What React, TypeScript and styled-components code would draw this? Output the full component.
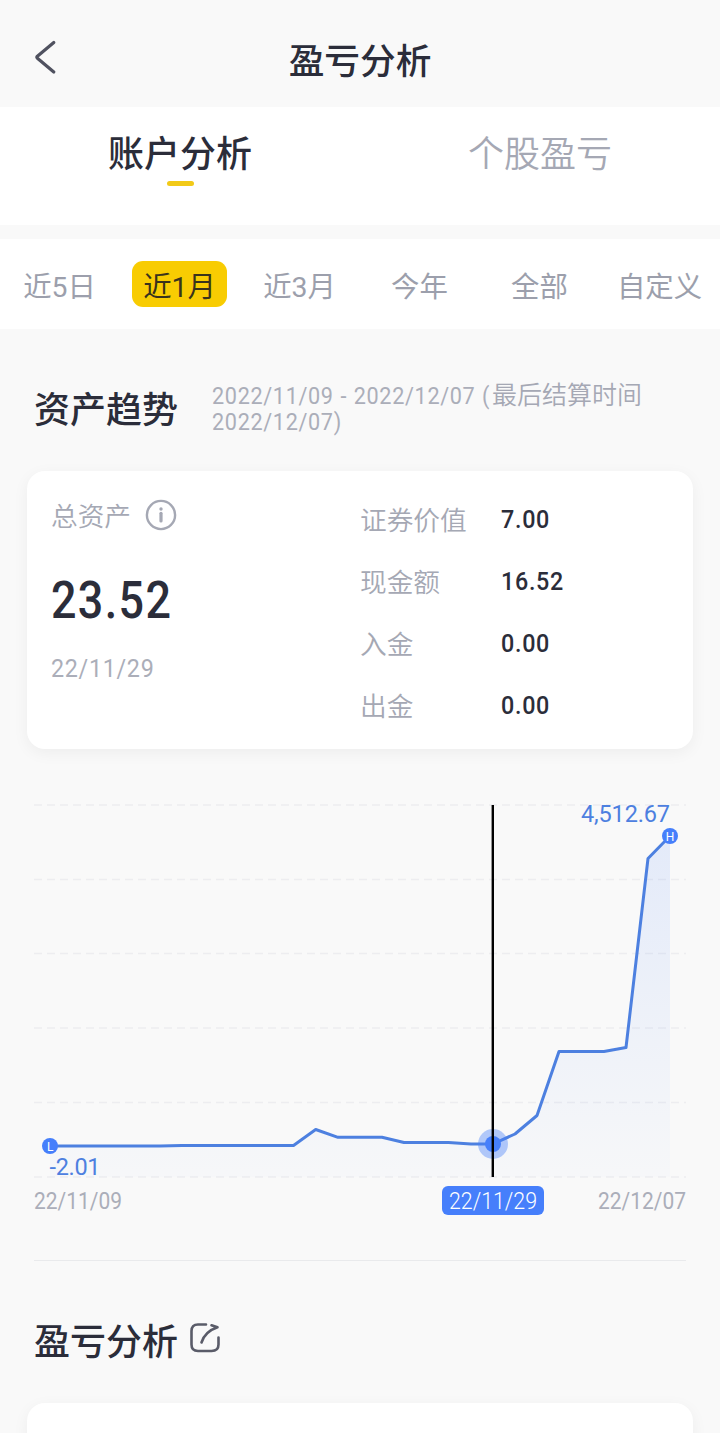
import React from "react";
import styled, { createGlobalStyle } from "styled-components";

const GlobalStyle = createGlobalStyle`
  * { box-sizing: border-box; }
  body {
    margin: 0;
    background: #f9f9f9;
    color: #2b2d3a;
    font-family: Roboto, "Noto Sans CJK SC", sans-serif;
  }
`;

const Screen = styled.main`
  width: 720px;
  height: 1433px;
  overflow: hidden;
  display: flex;
  flex-direction: column;
  background: #f9f9f9;
`;

const Header = styled.header`
  height: 107px;
  flex: none;
  display: grid;
  grid-template-columns: 92px 1fr 92px;
  align-items: center;
  padding-top: 11px;
`;

const BackButton = styled.button`
  border: 0;
  padding: 0 0 0 30px;
  margin-top: -5px;
  background: none;
  display: flex;
`;

const Title = styled.h1`
  margin: 0;
  text-align: center;
  font: 500 35.7px/54px "Noto Sans CJK SC", sans-serif;
`;

const MainTabs = styled.nav`
  height: 118px;
  flex: none;
  display: grid;
  grid-template-columns: 1fr 1fr;
  background: #fff;
`;

const MainTab = styled.div<{ $active?: boolean }>`
  display: flex;
  flex-direction: column;
  align-items: center;
  padding-top: 17px;
  font: ${(p) => (p.$active ? 500 : 350)} 36px/54px "Noto Sans CJK SC", sans-serif;
  color: ${(p) => (p.$active ? "#2b2d3a" : "#a5a8b4")};
`;

const Indicator = styled.span`
  width: 27px;
  height: 5px;
  margin-top: 3px;
  border-radius: 3px;
  background: #f2ca18;
`;

const Ranges = styled.nav`
  height: 90px;
  flex: none;
  margin-top: 14px;
  display: grid;
  grid-template-columns: repeat(6, 120px);
  align-items: center;
  justify-items: center;
  background: #fff;
`;

const Range = styled.div<{ $active?: boolean }>`
  width: 95px;
  height: 46px;
  margin-right: 1px;
  border-radius: 11px;
  display: flex;
  align-items: center;
  justify-content: center;
  white-space: nowrap;
  font: 400 28.4px/46px Roboto, "Noto Sans CJK SC", sans-serif;
  color: ${(p) => (p.$active ? "#39331c" : "#9c9fac")};
  background: ${(p) => (p.$active ? "#f8cc02" : "transparent")};
  padding-top: 8px;
`;

/* Figures are set narrower and looser than the text face. */
const Figure = styled.span<{ $width: number }>`
  display: inline-block;
  width: ${(p) => p.$width}px;
  white-space: pre;
  letter-spacing: 0.03em;
  transform: scaleX(0.88);
  transform-origin: left center;
`;

const TrendHeader = styled.section`
  height: 142px;
  flex: none;
  display: flex;
  padding: 51px 34px 0;
`;

const SectionTitle = styled.h2`
  margin: 0;
  font: 500 36px/54px "Noto Sans CJK SC", sans-serif;
`;

const Period = styled.div`
  margin: 3px 0 0 34px;
  font: 350 25px/26px Roboto, "Noto Sans CJK SC", sans-serif;
  color: #a5a8b4;
  white-space: nowrap;
  word-spacing: 0.8px;

  ${Figure} {
    font-weight: 400;
    font-size: 24.6px;
    letter-spacing: 0.03em;
    color: #abaeb9;
  }
`;

const PeriodLine = styled.div`
  height: 26px;
  display: flex;
`;

const Card = styled.section`
  height: 278px;
  flex: none;
  margin: 0 27px;
  border-radius: 18px;
  background: #fff;
  box-shadow: 0 4px 16px rgba(0, 0, 0, 0.05);
  display: grid;
  grid-template-columns: 309px 1fr;
  padding: 18px 24px;
`;

const Total = styled.div`
  display: flex;
  flex-direction: column;
`;

const TotalLabel = styled.div`
  height: 52px;
  display: flex;
  align-items: center;
  gap: 14px;
  font: 350 26.7px/40px "Noto Sans CJK SC", sans-serif;
  color: #a5a8b4;
`;

const Amount = styled.div`
  margin-top: 28px;
  font: 500 51px/64px Roboto, sans-serif;
`;

const AmountDate = styled.div`
  margin-top: 17px;
  font: 400 26.5px/36px Roboto, sans-serif;
  color: #abaeb9;
`;

const Details = styled.dl`
  margin: 0;
  display: grid;
  grid-template-columns: 141px 1fr;
  grid-auto-rows: 62px;
`;

const Term = styled.dt`
  font: 350 26.7px/59px "Noto Sans CJK SC", sans-serif;
  color: #a5a8b4;
`;

const Value = styled.dd`
  margin: 0;
  font: 500 26.5px/60px Roboto, sans-serif;
`;

const Chart = styled.svg`
  flex: none;
  display: block;
  margin-top: 31px;
  font-family: Roboto, sans-serif;
`;

const Divider = styled.hr`
  flex: none;
  width: 652px;
  height: 1px;
  margin: 30px 34px 0;
  border: 0;
  background: #e9eaec;
`;

const AnalysisHeader = styled.section`
  height: 142px;
  flex: none;
  display: flex;
  gap: 11px;
  padding: 51px 34px 0;
`;

const ShareIcon = styled.svg`
  margin-top: 9px;
`;

const NextCard = styled.section`
  height: 100px;
  flex: none;
  margin: 0 27px;
  border-radius: 18px;
  background: #fff;
  box-shadow: 0 4px 16px rgba(0, 0, 0, 0.05);
`;

const ranges = ["近5日", "近1月", "近3月", "今年", "全部", "自定义"];

const details = [
  { label: "证券价值", value: "7.00", width: 50 },
  { label: "现金额", value: "16.52", width: 64 },
  { label: "入金", value: "0.00", width: 50 },
  { label: "出金", value: "0.00", width: 50 },
];

const gridRows = [805, 879.5, 953.5, 1028, 1102.5, 1177];

const trend =
  "50,1146 160,1146 182,1145.5 293.5,1145.5 315.7,1129.5 338,1137.3 382,1137.3 404,1142.5 448.5,1142.5 471,1144 493,1144 515,1134 537,1115.5 559,1051.5 604,1051.5 626,1047.5 648,858.5 670,836";

export default function App() {
  return (
    <>
      <GlobalStyle />
      <Screen>
        <Header>
          <BackButton aria-label="返回">
            <svg width="30" height="40" viewBox="0 0 30 40" fill="none" stroke="#505260" strokeWidth="3.2" strokeLinecap="round" strokeLinejoin="round">
              <path d="M23.8 5.5 7.4 19.2Q6.4 20.2 7.4 21.2L23.8 35" />
            </svg>
          </BackButton>
          <Title>盈亏分析</Title>
        </Header>

        <MainTabs>
          <MainTab $active>
            账户分析
            <Indicator />
          </MainTab>
          <MainTab>个股盈亏</MainTab>
        </MainTabs>

        <Ranges>
          {ranges.map((r, i) => (
            <Range key={r} $active={i === 1}>{r}</Range>
          ))}
        </Ranges>

        <TrendHeader>
          <SectionTitle>资产趋势</SectionTitle>
          <Period>
            <PeriodLine><Figure $width={280}>2022/11/09 - 2022/12/07 (</Figure>最后结算时间</PeriodLine>
            <PeriodLine><Figure $width={130}>2022/12/07)</Figure></PeriodLine>
          </Period>
        </TrendHeader>

        <Card>
          <Total>
            <TotalLabel>
              总资产
              <svg width="32" height="32" viewBox="0 0 32 32" fill="none" stroke="#a5a8b4" strokeLinecap="round">
                <circle cx="16" cy="16" r="14.1" strokeWidth="2.4" />
                <path d="M16 14.3v7.6" strokeWidth="3.2" />
                <circle cx="16" cy="10" r="1.7" fill="#a5a8b4" stroke="none" />
              </svg>
            </TotalLabel>
            <Amount><Figure $width={120}>23.52</Figure></Amount>
            <AmountDate><Figure $width={104}>22/11/29</Figure></AmountDate>
          </Total>
          <Details>
            {details.map((d) => (
              <React.Fragment key={d.label}>
                <Term>{d.label}</Term>
                <Value><Figure $width={d.width}>{d.value}</Figure></Value>
              </React.Fragment>
            ))}
          </Details>
        </Card>

        <Chart width="720" height="450" viewBox="0 780 720 450">
          <defs>
            <linearGradient id="area" x1="0" y1="836" x2="0" y2="1177" gradientUnits="userSpaceOnUse">
              <stop offset="0" stopColor="#467ffb" stopOpacity="0.12" />
              <stop offset="1" stopColor="#467ffb" stopOpacity="0.015" />
            </linearGradient>
          </defs>
          {gridRows.map((y) => (
            <path key={y} d={`M34 ${y}H686`} stroke="#ededf0" strokeWidth="1.4" strokeDasharray="8 5" />
          ))}
          <polygon points={`50,1177 ${trend} 670,1177`} fill="url(#area)" />
          <polyline points={trend} fill="none" stroke="#4d80e0" strokeWidth="3" strokeLinejoin="round" />
          <circle cx="493" cy="1144" r="15" fill="#467ffb" fillOpacity="0.4" />
          <circle cx="493" cy="1144" r="8" fill="#467ffb" />
          <path d="M492.8 805V1177" stroke="#000" strokeWidth="2.4" />
          <circle cx="50" cy="1146" r="8" fill="#467ffb" />
          <text x="50.3" y="1151" fontSize="12" fill="#fff" textAnchor="middle">L</text>
          <circle cx="670" cy="836" r="8" fill="#467ffb" />
          <text x="670" y="841" fontSize="12" fill="#fff" textAnchor="middle">H</text>
          <text x="581" y="822" fontSize="23.5" fill="#4d80e0" textLength="89">4,512.67</text>
          <text x="49.5" y="1175" fontSize="23.5" fill="#4d80e0" textLength="51">-2.01</text>
          <rect x="442" y="1186" width="102" height="29" rx="6" fill="#467ffb" />
          <g fontSize="24.5" fontWeight="400" fill="#abaeb9">
            <text x="34" y="1209" textLength="88" lengthAdjust="spacingAndGlyphs">22/11/09</text>
            <text x="449" y="1209" fill="#fff" fontWeight="300" textLength="88" lengthAdjust="spacingAndGlyphs">22/11/29</text>
            <text x="598" y="1209" textLength="88" lengthAdjust="spacingAndGlyphs">22/12/07</text>
          </g>
        </Chart>

        <Divider />

        <AnalysisHeader>
          <SectionTitle>盈亏分析</SectionTitle>
          <ShareIcon width="34" height="34" viewBox="0 0 34 34" fill="none" stroke="#5a5c69" strokeWidth="2.6" strokeLinecap="round" strokeLinejoin="round">
            <path d="M17 3.5H9Q2.5 3.5 2.5 10V23.5Q2.5 30 9 30H22.5Q29.5 30 29.5 23.5V16.5" />
            <path d="M12.5 21.5Q16 10.5 28.5 6.3L22.5 4.3" />
          </ShareIcon>
        </AnalysisHeader>
        <NextCard />
      </Screen>
    </>
  );
}
